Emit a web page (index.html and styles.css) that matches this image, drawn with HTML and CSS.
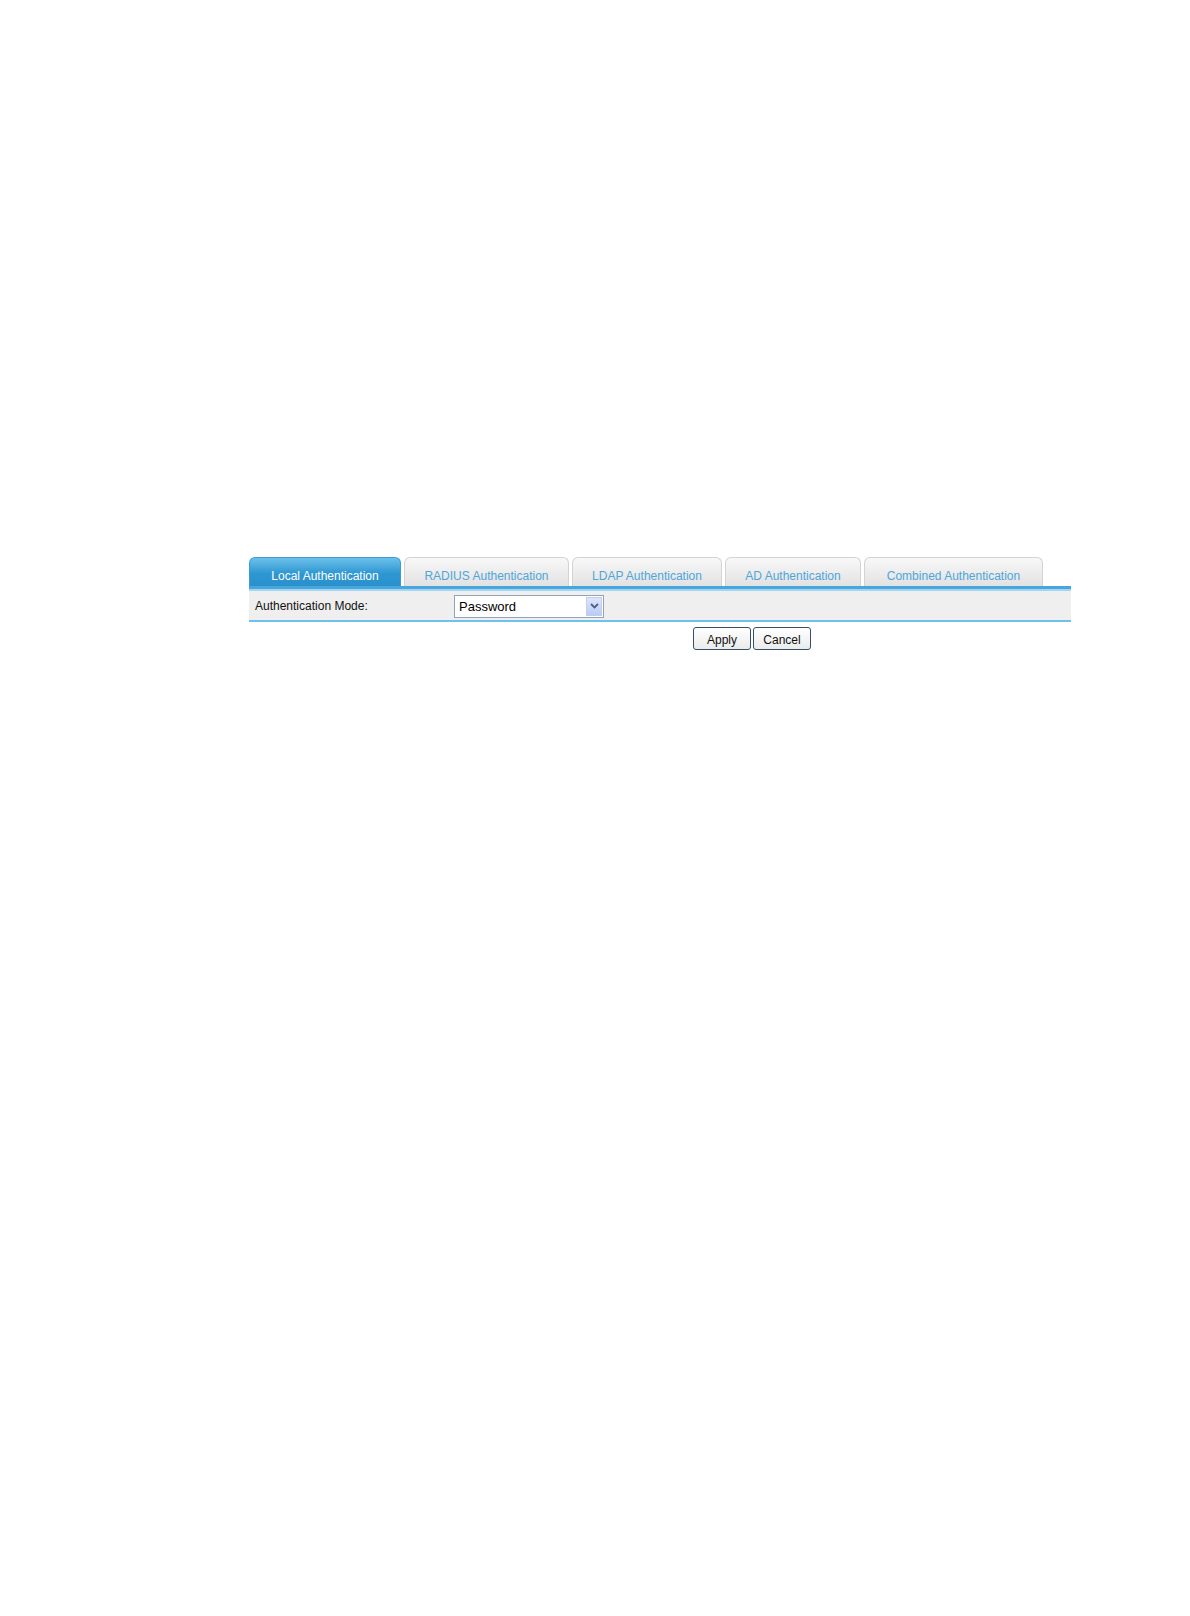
FILE: index.html
```html
<!DOCTYPE html>
<html>
<head>
<meta charset="utf-8">
<link rel="stylesheet" href="styles.css">
</head>
<body>
<div class="panel">
  <div class="tabs">
    <div class="tab active w1">Local Authentication</div>
    <div class="tab w2">RADIUS Authentication</div>
    <div class="tab w3">LDAP Authentication</div>
    <div class="tab w4">AD Authentication</div>
    <div class="tab w5">Combined Authentication</div>
  </div>
  <div class="bar"></div>
  <div class="row">
    <div class="label">Authentication Mode:</div>
    <div class="select">
      <span class="value">Password</span>
      <span class="arrow">
        <svg width="9" height="6" viewBox="0 0 9 6"><path d="M1 1 L4.5 4.5 L8 1" fill="none" stroke="#4d6185" stroke-width="1.8"/></svg>
      </span>
    </div>
  </div>
  <div class="buttons">
    <div class="btn">Apply</div>
    <div class="btn">Cancel</div>
  </div>
</div>
</body>
</html>
```
FILE: styles.css
```css
html, body {
  margin: 0;
  padding: 0;
  background: #ffffff;
}
body {
  font-family: "Liberation Sans", Arial, sans-serif;
  font-size: 12px;
  color: #000;
}
.panel {
  margin-left: 249px;
  padding-top: 557px;
  width: 822px;
}
.tabs {
  display: flex;
  align-items: flex-end;
  height: 29px;
  gap: 3px;
}
.tab {
  box-sizing: border-box;
  height: 29px;
  border: 1px solid #d3d3d3;
  border-bottom: none;
  border-radius: 6px 6px 0 0;
  background: linear-gradient(#f8f8f8, #e2e2e2);
  color: #4ea6da;
  display: flex;
  align-items: flex-end;
  justify-content: center;
  padding-bottom: 3px;
  font-size: 12px;
}
.tab.active {
  background: linear-gradient(#6cc0ea, #2e97d2 55%, #2a90cb);
  border-color: #3b9bd3;
  color: #ffffff;
}
.w1 { width: 152px; }
.w2 { width: 165px; }
.w3 { width: 150px; }
.w4 { width: 136px; }
.w5 { width: 179px; }
.bar {
  height: 3px;
  background: #45a7dd;
  border-bottom: 2px solid #a6d5ef;
}
.row {
  display: flex;
  align-items: center;
  height: 29px;
  background: #efefef;
  border-bottom: 2px solid #6fc0ea;
}
.label {
  width: 199px;
  padding-left: 6px;
  color: #111;
}
.select {
  box-sizing: border-box;
  width: 150px;
  height: 23px;
  margin-top: 1px;
  border: 1px solid #8fa3b9;
  background: #fff;
  display: flex;
  align-items: center;
  justify-content: space-between;
  padding: 1px 1px 1px 4px;
  font-size: 13px;
}
.arrow {
  width: 16px;
  height: 19px;
  background: linear-gradient(#dde5fb, #bccbf5);
  border: 1px solid #c0cdf0;
  box-sizing: border-box;
  display: flex;
  align-items: center;
  justify-content: center;
}
.buttons {
  display: flex;
  gap: 2px;
  margin-left: 444px;
  margin-top: 5px;
}
.btn {
  box-sizing: border-box;
  width: 58px;
  height: 23px;
  border: 1px solid #34506c;
  border-radius: 3px;
  background: linear-gradient(#ffffff, #ebebeb);
  display: flex;
  align-items: center;
  justify-content: center;
  padding-top: 2px;
  font-size: 12px;
  color: #111;
}
```
